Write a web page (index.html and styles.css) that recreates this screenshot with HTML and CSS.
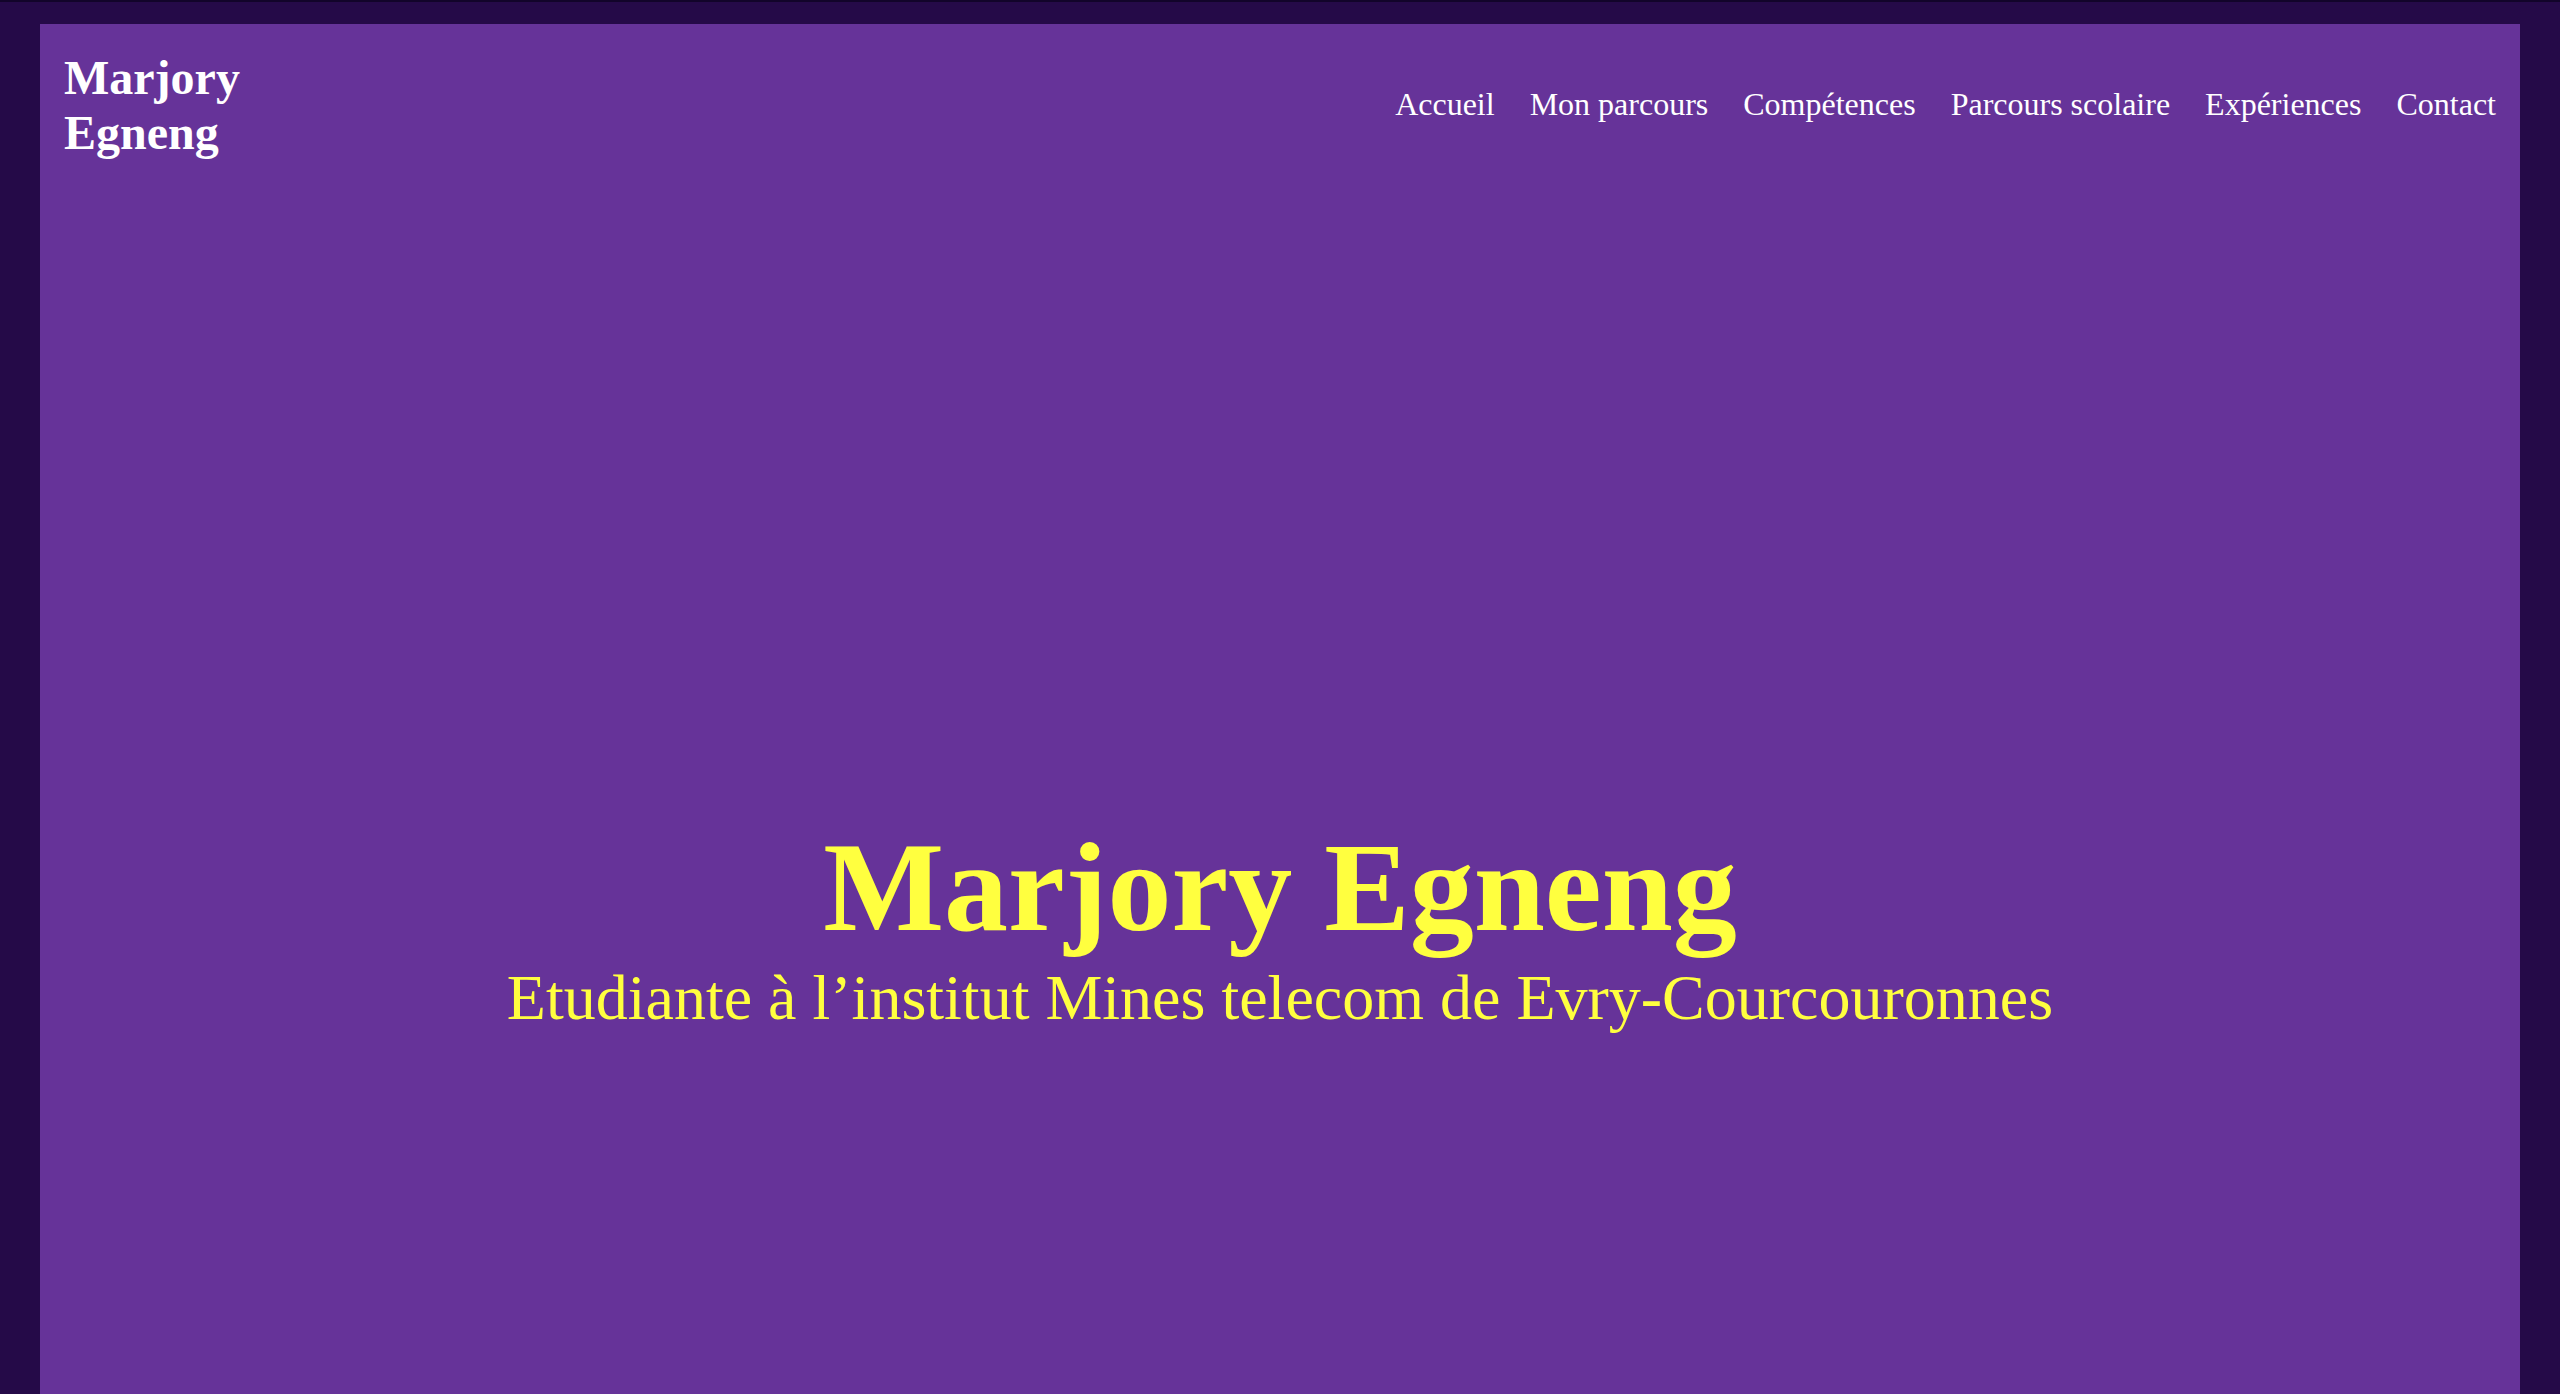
FILE: index.html
```html
<!DOCTYPE html>
<html lang="fr">
<head>
<meta charset="utf-8">
<title>Marjory Egneng</title>
<link rel="stylesheet" href="styles.css">
</head>
<body>
<div class="page">
  <header class="header">
    <div class="logo">Marjory Egneng</div>
    <nav class="nav">
      <a href="#">Accueil</a>
      <a href="#">Mon parcours</a>
      <a href="#">Compétences</a>
      <a href="#">Parcours scolaire</a>
      <a href="#">Expériences</a>
      <a href="#">Contact</a>
    </nav>
  </header>
  <section class="hero">
    <h1 class="hero-title">Marjory Egneng</h1>
    <p class="hero-sub">Etudiante à l’institut Mines telecom de Evry-Courcouronnes</p>
  </section>
</div>
</body>
</html>
```
FILE: styles.css
```css
html, body {
  margin: 0;
  padding: 0;
}
body {
  background: #250a48;
  font-family: "Liberation Serif", "Times New Roman", serif;
  border-top: 2px solid #12042a;
  overflow: hidden;
}
.page {
  margin: 22px 40px 0 40px;
  background: #663399;
  min-height: 1500px;
}
.header {
  display: flex;
  justify-content: space-between;
  align-items: center;
  padding: 26px 24px 24px 24px;
}
.logo {
  color: #ffffff;
  font-size: 48px;
  font-weight: bold;
  line-height: normal;
  max-width: 200px;
}
.nav {
  display: flex;
  gap: 35px;
  margin-top: -2px;
}
.nav a {
  color: #ffffff;
  text-decoration: none;
  font-size: 32px;
  line-height: normal;
}
.hero {
  padding-top: 630px;
  text-align: center;
  color: #ffff3f;
}
.hero-title {
  margin: 0;
  font-size: 128px;
  font-weight: bold;
  line-height: normal;
}
.hero-sub {
  margin: 0;
  font-size: 64px;
  line-height: normal;
}
```
